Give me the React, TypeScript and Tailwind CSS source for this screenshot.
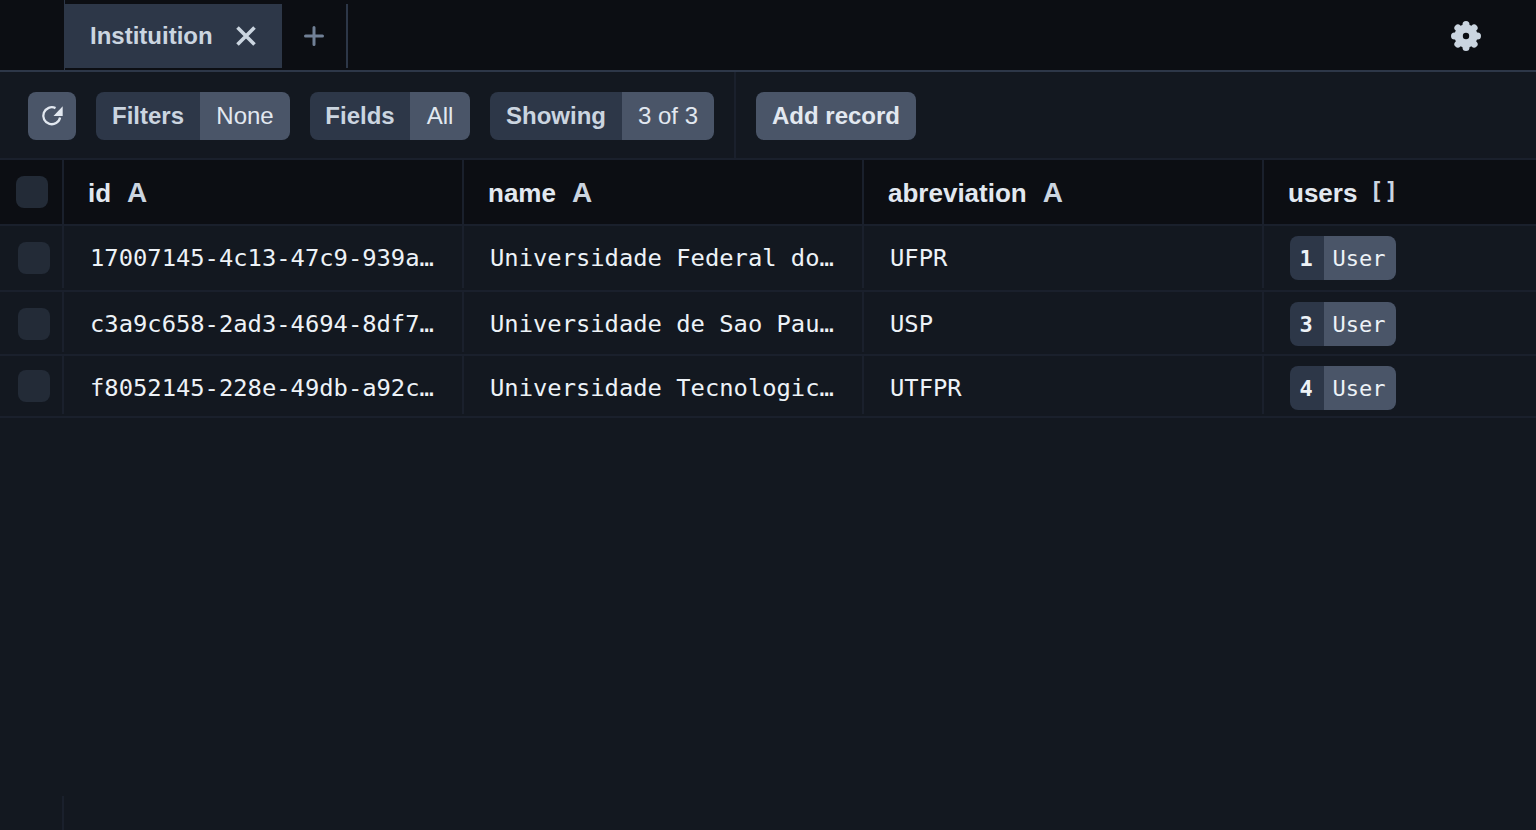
import { FC, ReactNode } from 'react';

const SANS = "font-['Liberation_Sans',Arial,sans-serif]";
const MONO = "font-['DejaVu_Sans_Mono',monospace]";

const rows = [
  {
    id: '17007145-4c13-47c9-939a-6a1f0c2e7d10',
    name: 'Universidade Federal do Parana',
    abbr: 'UFPR',
    users: 1,
    height: 'h-[66px]',
    cellHeight: 'h-[62px]',
    checkTop: 'pt-4',
  },
  {
    id: 'c3a9c658-2ad3-4694-8df7-20be41a97c33',
    name: 'Universidade de Sao Paulo',
    abbr: 'USP',
    users: 3,
    height: 'h-[64px]',
    cellHeight: 'h-[60px]',
    checkTop: 'pt-4',
  },
  {
    id: 'f8052145-228e-49db-a92c-91d37fe05b62',
    name: 'Universidade Tecnologica Federal do Parana',
    abbr: 'UTFPR',
    users: 4,
    height: 'h-[62px]',
    cellHeight: 'h-[58px]',
    checkTop: 'pt-[14px]',
  },
];

const Pill: FC<{ label: string; value: string; labelWidth: string; valueWidth: string }> = ({
  label,
  value,
  labelWidth,
  valueWidth,
}) => (
  <div className="flex h-12 overflow-hidden rounded-lg text-[24px]">
    <div className={`flex items-center justify-center bg-[#2d3748] font-bold text-[#cbd5e0] ${labelWidth}`}>
      {label}
    </div>
    <div className={`flex items-center justify-center bg-[#4a5568] text-[#e2e8f0] ${valueWidth}`}>{value}</div>
  </div>
);

const HeaderCell: FC<{ label: string; type: ReactNode; width: string }> = ({ label, type, width }) => (
  <div className={`flex h-full items-center border-r-2 border-[#1a202c] pl-6 pt-0.5 ${width}`}>
    <span className="text-[26px] font-bold text-[#e2e8f0]">{label}</span>
    {type}
  </div>
);

const TypeA = () => <span className="ml-4 text-[28px] font-bold text-[#cbd5e0]">A</span>;

const TextCell: FC<{ text: string; height: string }> = ({ text, height }) => (
  <div className={`w-[400px] border-r-2 border-[#1a202c] pl-[26px] pr-7 pt-[10px] text-[23.8px] leading-[44px] text-[#edf2f7] ${height} ${MONO}`}>
    <div className="truncate">{text}</div>
  </div>
);

const Gear = () => (
  <svg className="h-[40px] w-[40px]" viewBox="0 0 40 40" fill="none">
    <circle cx="20" cy="20" r="11.5" fill="#cbd5e0" />
    <g stroke="#cbd5e0" strokeWidth="7" strokeLinecap="round">
      <path d="M20 8.5v23M8.5 20h23M11.9 11.9l16.2 16.2M28.1 11.9 11.9 28.1" />
    </g>
    <circle cx="20" cy="20" r="3.2" fill="#0c0e13" />
  </svg>
);

export default function App() {
  return (
    <div className={`flex h-[830px] w-[1536px] flex-col overflow-hidden bg-[#131820] ${SANS}`}>
      {/* tab bar */}
      <div className="flex h-[72px] shrink-0 items-stretch border-b-2 border-[#2d3748] bg-[#0c0e13]">
        <div className="ml-[64px] w-px bg-[#2d3748]" />
        <div className="mt-1 mb-0.5 flex w-[217px] items-center bg-[#2d3748] pl-[25px]">
          <span className="text-[24px] font-bold text-[#cbd5e0]">Instituition</span>
          <svg className="ml-[23px] h-5 w-5" viewBox="0 0 20 20" fill="none" stroke="#cbd5e0" strokeWidth="3.6">
            <path d="M1.5 1.5 18.5 18.5M18.5 1.5 1.5 18.5" />
          </svg>
        </div>
        <div className="mt-1 mb-0.5 flex w-[66px] items-center justify-center border-r-2 border-[#2d3748]">
          <svg className="h-5 w-5" viewBox="0 0 20 20" fill="none" stroke="#718096" strokeWidth="3" strokeLinecap="round">
            <path d="M10 1.5v17M1.5 10h17" />
          </svg>
        </div>
        <div className="flex flex-1 items-center justify-end pr-[50px] pt-0.5">
          <Gear />
        </div>
      </div>

      {/* toolbar */}
      <div className="flex h-[88px] shrink-0 items-stretch border-b-2 border-[#1a202c]">
        <div className="flex w-[736px] items-center gap-5 border-r-2 border-[#1a202c] pl-7 pt-0.5">
          <button className="flex h-12 w-12 items-center justify-center rounded-lg bg-[#4a5568]">
            <svg className="h-6 w-6" viewBox="0 0 24 24" fill="none">
              <path d="M20.1 13.5A8.5 8.5 0 1 1 15.5 4.1" stroke="#e2e8f0" strokeWidth="2.3" />
              <path d="M22.7 2.2v9.8h-9.2z" fill="#e2e8f0" />
            </svg>
          </button>
          <Pill label="Filters" value="None" labelWidth="w-[104px]" valueWidth="w-[90px]" />
          <Pill label="Fields" value="All" labelWidth="w-[100px]" valueWidth="w-[60px]" />
          <Pill label="Showing" value="3 of 3" labelWidth="w-[132px]" valueWidth="w-[92px]" />
        </div>
        <div className="flex items-center pl-5 pt-0.5">
          <button className="flex h-12 w-40 items-center justify-center rounded-lg bg-[#4a5568] text-[24px] font-bold text-[#e2e8f0]">
            Add record
          </button>
        </div>
      </div>

      {/* table header */}
      <div className="flex h-[66px] shrink-0 items-stretch border-b-2 border-[#1a202c] bg-[#0c0e13]">
        <div className="flex w-[64px] items-center border-r-2 border-[#1a202c] pl-4">
          <div className="h-8 w-8 rounded-lg bg-[#232b37]" />
        </div>
        <HeaderCell label="id" type={<TypeA />} width="w-[400px]" />
        <HeaderCell label="name" type={<TypeA />} width="w-[400px]" />
        <HeaderCell label="abreviation" type={<TypeA />} width="w-[400px]" />
        <div className="flex items-center pl-6 pt-0.5">
          <span className="text-[26px] font-bold text-[#e2e8f0]">users</span>
          <span className={`ml-3 pb-1 text-[23px] font-bold tracking-[1px] text-[#cbd5e0] ${MONO}`}>[]</span>
        </div>
      </div>

      {/* rows */}
      {rows.map((row) => (
        <div key={row.id} className={`flex shrink-0 items-start border-b-2 border-[#1a202c] ${row.height}`}>
          <div className={`w-[64px] border-r-2 border-[#1a202c] pl-[18px] ${row.cellHeight} ${row.checkTop}`}>
            <div className="h-8 w-8 rounded-lg bg-[#232b37]" />
          </div>
          <TextCell text={row.id} height={row.cellHeight} />
          <TextCell text={row.name} height={row.cellHeight} />
          <TextCell text={row.abbr} height={row.cellHeight} />
          <div className={`pl-[26px] pt-[10px] text-[22px] ${MONO}`}>
            <div className="flex h-11 overflow-hidden rounded-lg">
              <div className="flex w-[34px] items-center justify-center bg-[#2d3748] pr-0.5 font-bold text-[#edf2f7]">
                {row.users}
              </div>
              <div className="flex w-[72px] items-center justify-center bg-[#4a5568] pr-0.5 text-[#edf2f7]">User</div>
            </div>
          </div>
        </div>
      ))}

      <div className="mt-auto ml-[62px] h-[34px] w-[2px] bg-[#1a202c]" />
    </div>
  );
}
